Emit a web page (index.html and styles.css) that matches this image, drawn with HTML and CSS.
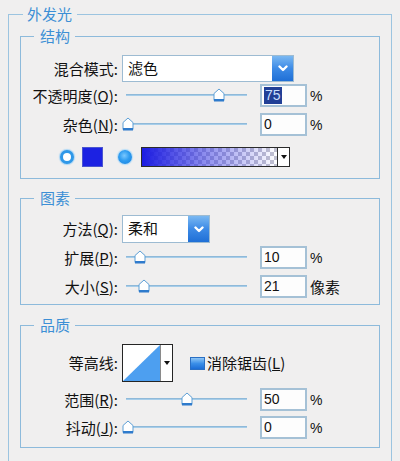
FILE: index.html
```html
<!DOCTYPE html>
<html lang="zh">
<head>
<meta charset="utf-8">
<title>外发光</title>
<link rel="stylesheet" href="styles.css">
</head>
<body>
<fieldset class="group outer">
  <legend>外发光</legend>

  <fieldset class="group sub sub-structure">
    <legend>结构</legend>
    <div class="row row-blend">
      <span class="label">混合模式:</span>
      <div class="select select-wide">
        <span class="select-text">滤色</span>
        <span class="select-btn"><svg width="10" height="7" viewBox="0 0 10 7"><path d="M1.5 1.5 L5 5 L8.5 1.5" fill="none" stroke="#fff" stroke-width="2.4" stroke-linecap="round" stroke-linejoin="round"/></svg></span>
      </div>
    </div>
    <div class="row row-opacity">
      <span class="label">不透明度(<u>O</u>):</span>
      <div class="slider"><span class="track"></span><svg class="thumb" style="left:91px" width="12" height="14" viewBox="0 0 12 14"><path d="M1 12.5 V5.5 L6 1 L11 5.5 V12.5 Z" fill="#fff" stroke="#5d9fd6" stroke-width="1"/><rect x="1" y="11" width="10" height="2.5" fill="#2f7bcc"/></svg></div>
      <span class="num"><span class="sel">75</span></span>
      <span class="unit unit-pct">%</span>
    </div>
    <div class="row row-noise">
      <span class="label">杂色(<u>N</u>):</span>
      <div class="slider"><span class="track"></span><svg class="thumb" style="left:0px" width="12" height="14" viewBox="0 0 12 14"><path d="M1 12.5 V5.5 L6 1 L11 5.5 V12.5 Z" fill="#fff" stroke="#5d9fd6" stroke-width="1"/><rect x="1" y="11" width="10" height="2.5" fill="#2f7bcc"/></svg></div>
      <span class="num">0</span>
      <span class="unit unit-pct">%</span>
    </div>
    <div class="row row-color">
      <span class="radio radio-off"></span>
      <span class="swatch"></span>
      <span class="radio radio-on"></span>
      <div class="gradient">
        <span class="gradient-fill"></span>
        <span class="gradient-arrow"><svg width="6" height="4" viewBox="0 0 6 4"><path d="M0 0 H6 L3 4 Z" fill="#111"/></svg></span>
      </div>
    </div>
  </fieldset>

  <fieldset class="group sub sub-elements">
    <legend>图素</legend>
    <div class="row row-method">
      <span class="label">方法(<u>Q</u>):</span>
      <div class="select select-narrow">
        <span class="select-text">柔和</span>
        <span class="select-btn"><svg width="10" height="7" viewBox="0 0 10 7"><path d="M1.5 1.5 L5 5 L8.5 1.5" fill="none" stroke="#fff" stroke-width="2.4" stroke-linecap="round" stroke-linejoin="round"/></svg></span>
      </div>
    </div>
    <div class="row row-spread">
      <span class="label">扩展(<u>P</u>):</span>
      <div class="slider"><span class="track"></span><svg class="thumb" style="left:12px" width="12" height="14" viewBox="0 0 12 14"><path d="M1 12.5 V5.5 L6 1 L11 5.5 V12.5 Z" fill="#fff" stroke="#5d9fd6" stroke-width="1"/><rect x="1" y="11" width="10" height="2.5" fill="#2f7bcc"/></svg></div>
      <span class="num">10</span>
      <span class="unit unit-pct">%</span>
    </div>
    <div class="row row-size">
      <span class="label">大小(<u>S</u>):</span>
      <div class="slider"><span class="track"></span><svg class="thumb" style="left:16px" width="12" height="14" viewBox="0 0 12 14"><path d="M1 12.5 V5.5 L6 1 L11 5.5 V12.5 Z" fill="#fff" stroke="#5d9fd6" stroke-width="1"/><rect x="1" y="11" width="10" height="2.5" fill="#2f7bcc"/></svg></div>
      <span class="num">21</span>
      <span class="unit">像素</span>
    </div>
  </fieldset>

  <fieldset class="group sub sub-quality">
    <legend>品质</legend>
    <div class="row row-contour">
      <span class="label">等高线:</span>
      <div class="contour">
        <span class="contour-preview"><svg width="37" height="36" viewBox="0 0 37 36"><rect width="37" height="36" fill="#fff"/><path d="M0 36 L37 0 V36 Z" fill="#4d9ff0"/></svg></span>
        <span class="contour-arrow"><svg width="6" height="4" viewBox="0 0 6 4"><path d="M0 0 H6 L3 4 Z" fill="#111"/></svg></span>
      </div>
      <span class="check"></span>
      <span class="check-label">消除锯齿(<u>L</u>)</span>
    </div>
    <div class="row row-range">
      <span class="label">范围(<u>R</u>):</span>
      <div class="slider"><span class="track"></span><svg class="thumb" style="left:59px" width="12" height="14" viewBox="0 0 12 14"><path d="M1 12.5 V5.5 L6 1 L11 5.5 V12.5 Z" fill="#fff" stroke="#5d9fd6" stroke-width="1"/><rect x="1" y="11" width="10" height="2.5" fill="#2f7bcc"/></svg></div>
      <span class="num">50</span>
      <span class="unit unit-pct">%</span>
    </div>
    <div class="row row-jitter">
      <span class="label">抖动(<u>J</u>):</span>
      <div class="slider"><span class="track"></span><svg class="thumb" style="left:0px" width="12" height="14" viewBox="0 0 12 14"><path d="M1 12.5 V5.5 L6 1 L11 5.5 V12.5 Z" fill="#fff" stroke="#5d9fd6" stroke-width="1"/><rect x="1" y="11" width="10" height="2.5" fill="#2f7bcc"/></svg></div>
      <span class="num">0</span>
      <span class="unit unit-pct">%</span>
    </div>
  </fieldset>
</fieldset>
</body>
</html>
```

FILE: styles.css
```css
* { box-sizing: border-box; }

html, body {
  margin: 0;
  padding: 0;
}

body {
  width: 400px;
  height: 461px;
  overflow: hidden;
  background: #f0efef;
  font-family: "Noto Sans CJK SC", "Noto Sans", sans-serif;
  font-size: 15px;
  color: #111;
}

.group {
  border: 1px solid #8dbadb;
  margin: 0;
  min-inline-size: 0;
}

legend {
  font-size: 15px;
  line-height: 20px;
  height: 20px;
  color: #3d8fd5;
}

.outer {
  margin: 4px 8px 0;
  padding: 0 11px 20px;
  border-color: #9cc4e0;
}

.outer > legend {
  margin-left: 3px;
  padding: 0 5px 0 4px;
}

.sub > legend {
  margin-left: 12px;
  padding: 0 5px 0 6px;
}

.sub-structure {
  margin-top: 2px;
  padding: 9px 0 11px 1px;
}

.sub-elements {
  margin-top: 9px;
  padding: 7px 0 5px 1px;
}

.sub-quality {
  margin-top: 10px;
  padding: 9px 0 7px 1px;
}

.row {
  display: flex;
  align-items: center;
  height: 24px;
}

.row-blend { height: 27px; }
.row-opacity { margin-top: 2px; }
.row-noise { margin-top: 5px; }
.row-color { margin-top: 10px; height: 20px; }
.row-method { height: 28px; }
.row-spread { margin-top: 3px; }
.row-size { margin-top: 5px; }
.row-contour { height: 38px; }
.row-range { margin-top: 6px; }
.row-jitter { margin-top: 4px; }

.label {
  flex: none;
  width: 96px;
  margin-right: 4px;
  text-align: right;
  white-space: nowrap;
  line-height: 20px;
}

.label u, .check-label u {
  text-underline-offset: 1px;
}

/* select */
.select {
  flex: none;
  display: flex;
  height: 100%;
  border: 1px solid #9dbbd2;
  background: #fff;
}

.select-wide { width: 172px; }
.select-narrow { width: 88px; }

.select-text {
  flex: 1;
  padding-left: 5px;
  line-height: 24px;
  font-size: 15px;
}

.select-btn {
  flex: none;
  width: 21px;
  display: flex;
  align-items: center;
  justify-content: center;
  background: linear-gradient(#7ab8f2, #3c8ae6 50%, #1f6fd6);
}

/* slider */
.slider {
  position: relative;
  flex: none;
  width: 130px;
  height: 24px;
}

.track {
  position: absolute;
  left: 4px;
  right: 5px;
  top: 10px;
  height: 2px;
  background: #a6cde9;
  border-top: 1px solid #8fb9d9;
}

.thumb {
  position: absolute;
  top: 4px;
}

/* number field */
.num {
  flex: none;
  align-self: flex-start;
  width: 47px;
  height: 23px;
  margin-left: 8px;
  border: 2px solid #a5c1d6;
  background: #fdfdfd;
  padding-left: 2px;
  font-family: "Liberation Sans", Arial, sans-serif;
  font-size: 14px;
  line-height: 19px;
  color: #111;
}

.sel {
  display: inline-block;
  background: #213f96;
  color: #c9defc;
  padding: 0 1px;
  line-height: 17px;
}

.unit {
  margin-left: 3px;
  font-size: 15px;
  line-height: 20px;
}

.unit-pct {
  font-family: "Liberation Sans", Arial, sans-serif;
  font-size: 14px;
}

/* colour row */
.radio {
  flex: none;
  width: 14px;
  height: 14px;
  border-radius: 50%;
}

.radio-off {
  margin-left: 38px;
  border: 3px solid #2f98e8;
  background: #fff;
  box-shadow: 0 0 1px 1px #a9d5f5;
}

.swatch {
  flex: none;
  width: 21px;
  height: 20px;
  margin-left: 8px;
  background: #1c22e2;
  border: 1px solid #4a55d0;
}

.radio-on {
  margin-left: 15px;
  background: radial-gradient(circle at 45% 40%, #7ac8ff 0, #2f9cf0 45%, #1580de 100%);
  box-shadow: 0 0 1px 1px #b3dcf8;
}

.gradient {
  flex: none;
  display: flex;
  width: 149px;
  height: 20px;
  margin-left: 9px;
  border: 1px solid #2b2b2b;
}

.gradient-fill {
  flex: 1;
  background:
    linear-gradient(to right, rgba(28, 28, 226, 1) 0%, rgba(60, 60, 226, 0.6) 45%, rgba(90, 90, 226, 0) 100%),
    conic-gradient(#c2c2d0 25%, #ffffff 0 50%, #c2c2d0 0 75%, #ffffff 0) 0 0 / 8px 8px;
}

.gradient-arrow {
  flex: none;
  width: 12px;
  border-left: 1px solid #2b2b2b;
  background: #fff;
  display: flex;
  align-items: center;
  justify-content: center;
}

/* contour */
.contour {
  flex: none;
  display: flex;
  width: 51px;
  height: 38px;
  border: 1px solid #252525;
  background: #fff;
}

.contour-preview {
  flex: none;
  width: 37px;
  display: flex;
}

.contour-arrow {
  flex: none;
  flex-grow: 1;
  border-left: 1px solid #8a8a8a;
  display: flex;
  align-items: center;
  justify-content: center;
}

.check {
  flex: none;
  width: 15px;
  height: 13px;
  margin-left: 17px;
  border: 1px solid #2a6fc4;
  background: linear-gradient(#8fc6f6, #3b8fe8 50%, #1c6dd6);
}

.check-label {
  margin-left: 2px;
  font-size: 15px;
  line-height: 20px;
}
```
